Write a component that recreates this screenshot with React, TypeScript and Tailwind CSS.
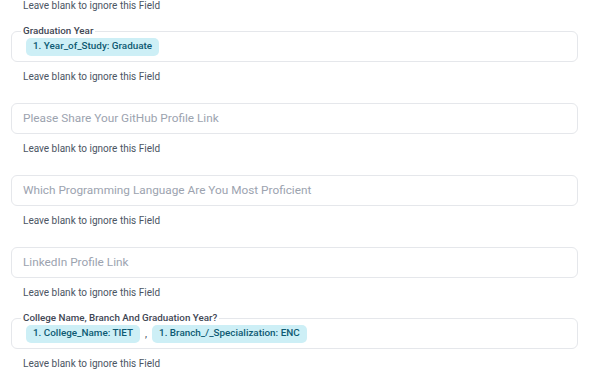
import React from "react";

const font = { fontFamily: "Roboto, 'Liberation Sans', sans-serif" };

function Helper() {
  return (
    <div className="mt-[9px] h-[12px] pl-[12px] text-[10px] leading-[12px] text-[#4b5563]">
      Leave blank to ignore this Field
    </div>
  );
}

function Chip({ children }: { children: React.ReactNode }) {
  return (
    <span className="inline-flex h-[18px] items-center rounded-[5px] bg-[#cdeff6] px-[7px] text-[9.9px] font-medium text-[#0e5a73]">
      {children}
    </span>
  );
}

function TextField({ placeholder }: { placeholder: string }) {
  return (
    <div className="flex h-[31px] items-center rounded-[6px] border border-[#e5e7eb] px-[11px] text-[11.8px] text-[#9ca3af]">
      {placeholder}
    </div>
  );
}

function ChipField({ label, children }: { label: string; children: React.ReactNode }) {
  return (
    <div className="relative flex h-[31px] items-center gap-[4px] rounded-[6px] border border-[#e5e7eb] px-[14px]">
      <span className="absolute left-[9px] top-[-7px] bg-white px-[2px] text-[9.8px] leading-[12px] text-[#3f4654]" style={{ fontWeight: 500 }}>
        {label}
      </span>
      {children}
    </div>
  );
}

export default function App() {
  return (
    <div className="h-[373px] w-[591px] overflow-hidden bg-white pl-[11px] pr-[13px]" style={font}>
      <div className="mt-[-9px]">
        <Helper />
      </div>
      <div className="mt-[19px]">
        <ChipField label="Graduation Year">
          <Chip>1. Year_of_Study: Graduate</Chip>
        </ChipField>
        <Helper />
      </div>
      <div className="mt-[20px]">
        <TextField placeholder="Please Share Your GitHub Profile Link" />
        <Helper />
      </div>
      <div className="mt-[20px]">
        <TextField placeholder="Which Programming Language Are You Most Proficient" />
        <Helper />
      </div>
      <div className="mt-[20px]">
        <TextField placeholder="LinkedIn Profile Link" />
        <Helper />
      </div>
      <div className="mt-[19px]">
        <ChipField label="College Name, Branch And Graduation Year?">
          <Chip>1. College_Name: TIET</Chip>
          <span className="px-[1px] text-[10px] text-[#374151]">,</span>
          <Chip>1. Branch_/_Specialization: ENC</Chip>
        </ChipField>
        <Helper />
      </div>
    </div>
  );
}
